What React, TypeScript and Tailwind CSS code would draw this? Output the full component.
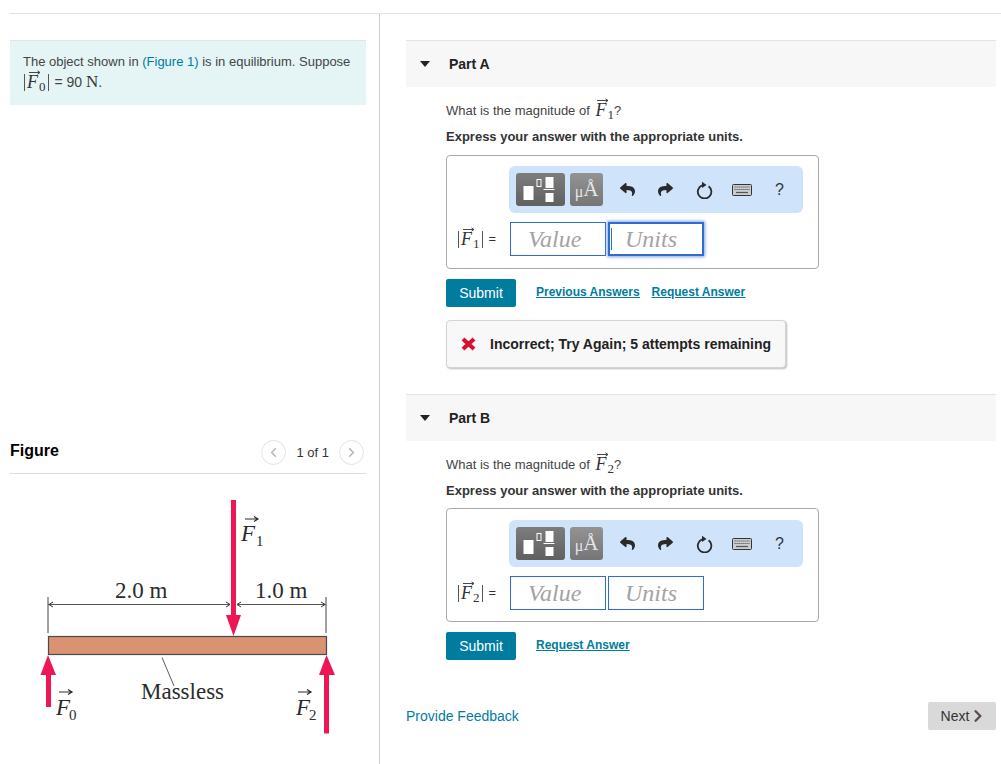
import React from "react";
import { FaReply, FaShare, FaChevronRight } from "react-icons/fa";
import { ChevronLeft, ChevronRight } from "lucide-react";

const SERIF = "font-['Liberation_Serif','Times_New_Roman',serif]";

// F with vector arrow and subscript
function VecF({ sub }: { sub: string }) {
  return (
    <span className={`relative inline-block ${SERIF} text-[18px] text-[#333] leading-none`}>
      <svg className="absolute left-[2px] -top-[3px]" width="12" height="5" viewBox="0 0 12 5">
        <path d="M0 2.5H10.5M8.5 0.8L11 2.5L8.5 4.2" fill="none" stroke="#333" strokeWidth="0.9" />
      </svg>
      <span className="italic">F</span>
      <span className="relative top-[3px] ml-[1px] text-[13px]">{sub}</span>
    </span>
  );
}

function Bar() {
  return <span className="inline-block w-px h-[17px] mx-[2px] bg-[#555]" />;
}

function TemplateIcon() {
  return (
    <svg width="40" height="26" viewBox="0 0 40 26">
      <rect x="2.5" y="9" width="10" height="14" fill="#fff" />
      <rect x="16" y="2.5" width="4" height="7" fill="none" stroke="#fff" strokeWidth="1" />
      <rect x="24.5" y="0" width="8" height="11" fill="#fff" />
      <rect x="22.5" y="12" width="11" height="1" fill="#fff" />
      <rect x="24.5" y="16" width="8" height="9" fill="#fff" />
    </svg>
  );
}

function KeyboardIcon() {
  return (
    <svg width="20" height="12" viewBox="0 0 20 12">
      <rect x="0.5" y="0.5" width="19" height="11" rx="1" fill="#c9ccd0" stroke="#333" />
      <path d="M2.5 3H17.5M2.5 5.5H17.5" stroke="#555" strokeWidth="1.2" strokeDasharray="1.2 0.8" />
      <path d="M4 8.5H16" stroke="#555" strokeWidth="1.2" />
    </svg>
  );
}

function ResetIcon() {
  return (
    <svg width="18" height="18" viewBox="0 0 18 18">
      <path d="M13.6 5.2A6.8 6.8 0 1 1 7 4.4" fill="none" stroke="#2a2a2a" strokeWidth="1.8" />
      <path d="M7 0.8L11.5 3.9L7 7Z" fill="#2a2a2a" />
    </svg>
  );
}

function Toolbar() {
  return (
    <div className="ml-[62px] w-[294px] h-[47px] rounded-md bg-[#cfe4fb] flex items-center pl-[7px]">
      <div className="w-[49px] h-[33px] rounded-[3px] bg-gradient-to-b from-[#7d7d7d] to-[#606060] flex items-center justify-center">
        <TemplateIcon />
      </div>
      <div className={`ml-[5px] w-[33px] h-[33px] rounded-[3px] bg-gradient-to-b from-[#939393] to-[#767676] flex items-end justify-center pb-[6px] text-[#e6e6e6] leading-none ${SERIF}`}>
        <span className="text-[16px]">μ</span>
        <span className="text-[21px]">Å</span>
      </div>
      <FaReply className="ml-[17px] text-[#2a2a2a]" size={15} />
      <FaShare className="ml-[23px] text-[#2a2a2a]" size={15} />
      <div className="ml-[22px] flex"><ResetIcon /></div>
      <div className="ml-[19px] flex"><KeyboardIcon /></div>
      <span className="ml-[23px] text-[16px] text-[#333]">?</span>
    </div>
  );
}

function Field({ text, focused = false, units = false }: { text: string; focused?: boolean; units?: boolean }) {
  const base = focused
    ? "border-2 pl-[15px] shadow-[0_0_3px_1px_#7fa6e6]"
    : units
      ? "border pl-[16px]"
      : "border pl-[17px]";
  return (
    <div className={`relative w-[96px] h-[34px] flex items-center border-[#2f6ccf] bg-white italic text-[24px] text-[#a3a3a3] ${SERIF} ${base}`}>
      {focused && <span className="absolute left-[1px] top-[4px] w-px h-[22px] bg-[#2f6ccf]" />}
      {text}
    </div>
  );
}

function Part({
  title,
  sub,
  focused = false,
  prev = false,
  tight = false,
  children,
}: {
  title: string;
  sub: string;
  focused?: boolean;
  prev?: boolean;
  tight?: boolean;
  children?: React.ReactNode;
}) {
  return (
    <section>
      <div className="h-[47px] bg-[#f7f7f7] border-t border-[#e3e3e3] flex items-center">
        <span className="ml-[14px] w-0 h-0 border-x-[5.5px] border-x-transparent border-t-[6px] border-t-[#222]" />
        <h2 className="ml-[19px] text-[14px] font-bold text-[#222]">{title}</h2>
      </div>
      <div className="pl-[40px]">
        <p className="mt-[12px] h-[24px] flex items-center text-[13px] text-[#444]">
          What is the magnitude of&nbsp;
          <span className="ml-[2px]"><VecF sub={sub} /></span>?
        </p>
        <p className="mt-[4px] text-[13px] leading-[20px] font-bold text-[#333]">
          Express your answer with the appropriate units.
        </p>
        <div className={`${tight ? "mt-[7px] pt-[11px]" : "mt-[8px] pt-[10px]"} w-[373px] h-[114px] rounded-[4px] border border-[#a9a9a9]`}>
          <Toolbar />
          <div className="mt-[9px] flex items-center">
            <div className="w-[63px] pl-[9px] text-[14px] text-[#333] flex items-center">
              <Bar />
              <VecF sub={sub} />
              <Bar />
              <span className="ml-[4px] text-[13px]">=</span>
            </div>
            <div className="flex gap-[2px]">
              <Field text="Value" />
              <Field text="Units" units focused={focused} />
            </div>
          </div>
        </div>
        <div className="mt-[10px] flex items-center">
          <button className="w-[70px] h-[28px] rounded-[2px] bg-[#007c9f] text-white text-[14px]">Submit</button>
          <div className="ml-[20px] -mt-[2px] flex gap-[12px] text-[12px] font-bold text-[#007c9f] underline">
            {prev && <a>Previous Answers</a>}
            <a>Request Answer</a>
          </div>
        </div>
        {children}
      </div>
    </section>
  );
}

function Diagram() {
  const red = "#ee1655";
  const ink = "#2b2b2b";
  const num = { fontFamily: "'Liberation Serif', serif", fontSize: 23, fill: ink };
  const ital = { ...num, fontStyle: "italic" as const };
  const small = { ...num, fontSize: 15 };
  const arrow = (x: number, y: number) => (
    <path d={`M${x} ${y}H${x + 12}M${x + 9} ${y - 2.5}L${x + 13} ${y}L${x + 9} ${y + 2.5}`} fill="none" stroke={ink} strokeWidth="1.2" />
  );
  return (
    <svg className="block" width="356" height="274" viewBox="10 490 356 274">
      {/* dimension lines */}
      <path d="M48 597V633M326 597V633" stroke="#444" strokeWidth="1" />
      <path d="M48 604.5H229M238 604.5H326" stroke="#555" strokeWidth="1" />
      <path d="M53 602L49 604.5L53 607M226 602L230 604.5L226 607M241 602L237 604.5L241 607M321 602L325 604.5L321 607" fill="none" stroke="#333" strokeWidth="1" />
      <text x="115" y="598" style={num}>2.0 m</text>
      <text x="255" y="598" style={num}>1.0 m</text>
      {/* beam */}
      <rect x="48.5" y="636.5" width="278" height="18" fill="#d99371" stroke="#4a4a4a" strokeWidth="1.2" />
      <path d="M162 657.5L174 686" stroke="#333" strokeWidth="0.8" />
      <text x="141" y="699" style={num}>Massless</text>
      {/* forces */}
      <path d="M231 500H236V615H241L233.5 636L226 615H231Z" fill={red} />
      <path d="M48 655L56 675H51V707H46V675H40.5Z" fill={red} />
      <path d="M326.5 655L335 675H329V733.5H324V675H319Z" fill={red} />
      {/* labels */}
      {arrow(245, 519)}
      <text x="241" y="541" style={ital}>F</text>
      <text x="256" y="546" style={small}>1</text>
      {arrow(59, 692)}
      <text x="56" y="715" style={ital}>F</text>
      <text x="69" y="720" style={small}>0</text>
      {arrow(298, 692)}
      <text x="296" y="715" style={ital}>F</text>
      <text x="309" y="720" style={small}>2</text>
    </svg>
  );
}

export default function App() {
  return (
    <div className="w-[1001px] h-[764px] overflow-hidden bg-white font-['Liberation_Sans',Arial,sans-serif]">
      <div className="h-[13px]" />
      <div className="ml-[10px] border-t border-[#e0e0e0] flex h-[751px]">
        {/* left column */}
        <div className="w-[370px] border-r border-[#c8ccd4] pt-[26px] pr-[13px]">
          <div className="h-[65px] bg-[#e5f5f6] border-t border-[#dfe6e8] pl-[13px] pt-[11px] text-[13px] leading-[20px] text-[#444]">
            <p>
              The object shown in <a className="text-[#007c9f]">(Figure 1)</a> is in equilibrium. Suppose
            </p>
            <p className="flex items-center h-[20px] -ml-[1px] text-[14px]">
              <Bar />
              <VecF sub="0" />
              <Bar />
              <span>&nbsp;= 90&nbsp;</span>
              <span className={`${SERIF} text-[17px] text-[#333]`}>N</span>.
            </p>
          </div>
          <div className="mt-[331px] h-[38px] border-b border-[#dcdcdc] flex items-start justify-between">
            <h2 className="mt-[3px] text-[16px] font-bold text-black">Figure</h2>
            <div className="mt-[4px] mr-[2px] flex items-center text-[13px] text-[#333]">
              <span className="w-[25px] h-[25px] rounded-full border border-[#e3e3e3] flex items-center justify-center text-[#b5b5b5]">
                <ChevronLeft size={15} strokeWidth={2.5} />
              </span>
              <span className="mx-[10px]">1 of 1</span>
              <span className="w-[25px] h-[25px] rounded-full border border-[#e3e3e3] flex items-center justify-center text-[#b5b5b5]">
                <ChevronRight size={15} strokeWidth={2.5} />
              </span>
            </div>
          </div>
          <div className="mt-[16px]">
            <Diagram />
          </div>
        </div>
        {/* right column */}
        <div className="w-[590px] ml-[26px] pt-[26px]">
          <Part title="Part A" sub="1" focused prev>
            <div className="mt-[13px] w-[340px] h-[48px] rounded-[4px] border border-[#d4d4d4] bg-[#f8f8f8] shadow-[1px_1px_2px_#bbb] flex items-center pl-[14px]">
              <svg width="15" height="14" viewBox="0 0 15 14">
                <path d="M2 2L13 12M13 2L2 12" stroke="#d7102f" strokeWidth="4" />
              </svg>
              <span className="ml-[14px] text-[14px] font-bold text-[#222]">
                Incorrect; Try Again; 5 attempts remaining
              </span>
            </div>
          </Part>
          <div className="h-[26px]" />
          <Part title="Part B" sub="2" tight />
          <div className="mt-[42px] flex items-center justify-between">
            <a className="text-[14px] text-[#007c9f]">Provide Feedback</a>
            <button className="w-[68px] h-[28px] rounded-[2px] bg-[#d9d9d9] text-[14px] text-[#333] flex items-center justify-center gap-[2px] pl-[2px]">
              Next
              <FaChevronRight size={14} className="text-[#5a4d4d]" />
            </button>
          </div>
        </div>
      </div>
    </div>
  );
}
